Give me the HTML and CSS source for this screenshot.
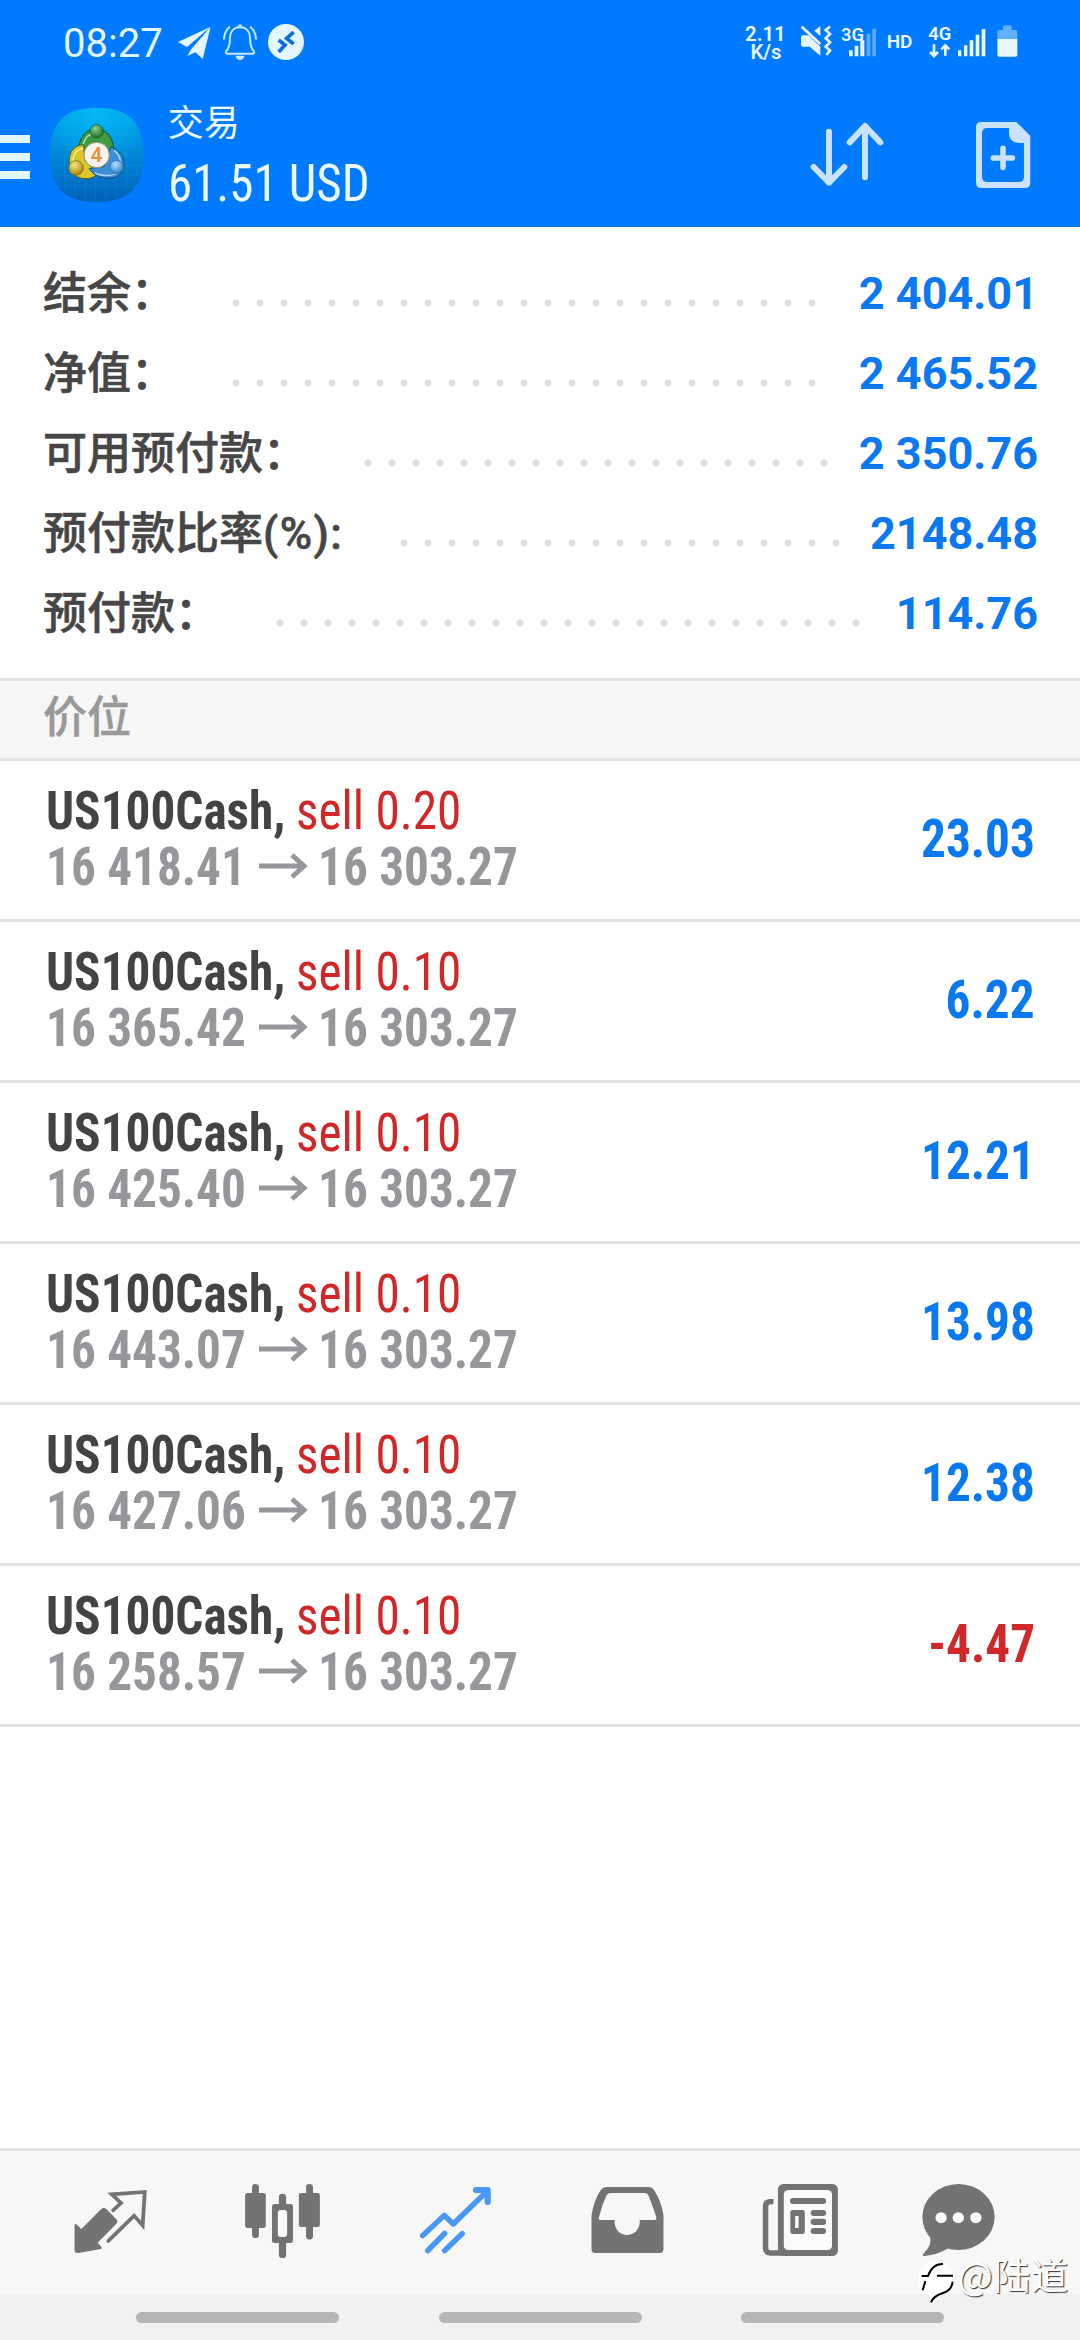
FILE: index.html
```
<!DOCTYPE html>
<html lang="zh-CN">
<head>
<meta charset="utf-8">
<title>交易</title>
<link rel="stylesheet" href="styles.css">
</head>
<body>
<div class="screen">
  <header class="header">
    <div class="status">
      <span class="clock">08:27</span>
      <svg class="status-left" viewBox="525 60 396 132">
        <g fill="#e4f6ff">
          <path d="M534 126L632 80L561 141Z"/>
          <path d="M632 80L608 177L586 157L562 168L574 147Z"/>
          <circle cx="858" cy="126" r="54"/>
        </g>
        <g fill="none" stroke="#c6ecff" stroke-width="6" stroke-linecap="round" stroke-linejoin="round">
          <path d="M720 82C700 82 690 96 690 114C690 136 687 145 678 154Q676 161 682 161H758Q764 161 762 154C753 145 750 136 750 114C750 96 740 82 720 82Z"/>
          <path d="M688 82Q674 93 672 116M752 82Q766 93 768 116"/>
        </g>
        <path d="M712 80Q720 66 728 80ZM707 167H733Q731 180 720 180Q709 180 707 167Z" fill="#c6ecff"/>
        <path d="M836 120L855 135L836 156M881 96L860 115L881 132" fill="none" stroke="#0a6fe0" stroke-width="11"/>
      </svg>
      <svg class="status-right" viewBox="74 60 822 132" fill="#e9f6ff">
        <text class="s-speed" x="135" y="123">2.11</text>
        <text class="s-speed" x="137" y="178">K/s</text>
        <path d="M242 112Q242 106 248 106H264L300 140V167L268 140H248Q242 140 242 134Z"/>
        <path d="M244 80L300 132" stroke="#e9f6ff" stroke-width="8"/>
        <path d="M300 78V108L282 92Z"/>
        <path d="M329 80L316 90L329 102L316 115L329 127L316 140L329 152L318 165" fill="none" stroke="#e9f6ff" stroke-width="8"/>
        <text class="s-net" x="362" y="122">3G</text>
        <path d="M386 151h11v18h-11zM403 137h11v32h-11zM420 121h12v48h-12z"/>
        <path d="M439 101h11v68h-11zM456 86h11v83h-11z" opacity=".4"/>
        <text class="s-hd" x="499" y="143">HD</text>
        <text class="s-net" x="624" y="120">4G</text>
        <path d="M641 133V166M629 156L641 168L653 156M675 167V138M663 148L675 136L687 148" fill="none" stroke="#e9f6ff" stroke-width="8"/>
        <path d="M713 151h10v18h-10zM731 136h10v33h-10zM748 121h11v48h-11zM766 104h11v65h-11zM784 87h11v82h-11z"/>
        <path d="M831 96Q831 90 837 90H848V81Q848 76 853 76H869Q874 76 874 81V90H885Q891 90 891 96V117H831Z" opacity=".42"/>
        <path d="M831 117H891V164Q891 170 885 170H837Q831 170 831 164Z"/>
      </svg>
    </div>
    <div class="titlebar">
      <div class="menu"><i></i><i></i><i></i></div>
      <svg class="logo" viewBox="0 0 280 282">
        <defs>
          <linearGradient id="bg" x1="0" y1="0" x2="0" y2="1"><stop offset="0" stop-color="#00a6e8"/><stop offset=".5" stop-color="#0088d8"/><stop offset="1" stop-color="#0060b8"/></linearGradient>
          <radialGradient id="glow" cx=".5" cy="0" r=".6"><stop offset="0" stop-color="#00b8f4"/><stop offset="1" stop-color="#00b8f4" stop-opacity="0"/></radialGradient>
          <radialGradient id="gr" cx=".4" cy=".3" r=".7"><stop offset="0" stop-color="#8fd08a"/><stop offset="1" stop-color="#1d6f2c"/></radialGradient>
          <radialGradient id="ye" cx=".4" cy=".3" r=".7"><stop offset="0" stop-color="#f4e87a"/><stop offset="1" stop-color="#a8850c"/></radialGradient>
          <radialGradient id="bl" cx=".4" cy=".3" r=".7"><stop offset="0" stop-color="#b4defc"/><stop offset="1" stop-color="#2f80c8"/></radialGradient>
          <path id="sq" d="M140 0C235 0 280 40 280 141S235 282 140 282S0 242 0 141S45 0 140 0Z"/>
        </defs>
        <use href="#sq" fill="url(#bg)"/>
        <use href="#sq" fill="url(#glow)"/>
        <path d="M44 26V256M75 10V272M106 4V278M137 0V282M168 3V279M199 9V273M230 24V258M20 50H260M8 80H272M3 110H277M0 141H280M3 172H277M8 203H272M20 234H260" stroke="#3bb4ee" stroke-opacity=".3" stroke-width="1.5" fill="none"/>
        <g stroke-linejoin="round">
          <path d="M88 108C98 74 118 62 140 62S184 80 190 112C192 132 184 152 166 168L138 120L100 140C88 132 86 120 88 108Z" fill="#3f9a42" stroke="#124f2a" stroke-width="3"/>
          <path d="M99 110C106 84 122 75 142 75" stroke="#b9e4a8" stroke-width="4" fill="none"/>
          <path d="M100 110C74 112 58 128 58 158C56 184 70 212 108 212C126 212 138 204 142 194L106 160Z" fill="#dcc62c" stroke="#55601a" stroke-width="3"/>
          <path d="M100 121C80 124 69 138 69 160" stroke="#faf3a0" stroke-width="4" fill="none"/>
          <path d="M182 116C208 126 222 146 222 170C222 198 200 212 168 210C144 208 130 200 118 182L162 176Z" fill="#3c8ed8" stroke="#164b80" stroke-width="3"/>
          <path d="M134 194C150 204 190 208 206 190M192 128Q210 140 211 160" stroke="#a8dcfa" stroke-width="4" fill="none"/>
          <circle cx="140" cy="70" r="20" fill="url(#gr)" stroke="#155a26" stroke-width="2"/>
          <circle cx="78" cy="180" r="22" fill="url(#ye)" stroke="#6e6210" stroke-width="2"/>
          <circle cx="200" cy="177" r="20" fill="url(#bl)" stroke="#2a68a4" stroke-width="2"/>
        </g>
        <circle cx="140" cy="141" r="38" fill="#f7f3ee" stroke="#8a9a78" stroke-width="3"/>
        <text class="logo-num" x="139" y="163">4</text>
      </svg>
      <div class="heading">
        <div class="heading-title">交易</div>
        <div class="heading-sum"><span class="narrow">61.51 USD</span></div>
      </div>
      <svg class="sort" viewBox="264 360 228 210" fill="none" stroke="#c9e2ff" stroke-width="18" stroke-linecap="round" stroke-linejoin="round">
        <path d="M324 395V548M278 501L324 548L370 501M432 532V378M386 427L432 378L478 427"/>
      </svg>
      <svg class="new-order" viewBox="762 360 169 210">
        <path fill="#c9e2ff" fill-rule="evenodd" d="M781 366H886L928 407V548Q928 564 912 564H781Q765 564 765 548V382Q765 366 781 366ZM800 384Q783 384 783 400V530Q783 546 800 546H893Q909 546 909 530V429H893Q864 426 864 399V384Z"/>
        <path d="M846 445V502M817 474H874" stroke="#c9e2ff" stroke-width="17" stroke-linecap="round"/>
      </svg>
    </div>
  </header>

  <section class="summary">
    <div class="sum-row"><span>结余：</span><i class="dots"></i><b>2 404.01</b></div>
    <div class="sum-row"><span>净值：</span><i class="dots"></i><b>2 465.52</b></div>
    <div class="sum-row"><span>可用预付款：</span><i class="dots"></i><b>2 350.76</b></div>
    <div class="sum-row"><span>预付款比率<span class="unit">(%):</span></span><i class="dots"></i><b>2148.48</b></div>
    <div class="sum-row"><span>预付款：</span><i class="dots"></i><b>114.76</b></div>
  </section>

  <h2 class="section-title">价位</h2>

  <main class="trades">
    <article class="trade">
      <div class="deal"><b class="narrow">US100Cash,</b><span class="narrow side">sell 0.20</span></div>
      <div class="prices"><b class="narrow">16 418.41</b><svg class="arrow" viewBox="0 0 49 26"><path d="M0 13H45M33 2L45 13L33 24"/></svg><b class="narrow">16 303.27</b></div>
      <b class="narrow profit">23.03</b>
    </article>
    <article class="trade">
      <div class="deal"><b class="narrow">US100Cash,</b><span class="narrow side">sell 0.10</span></div>
      <div class="prices"><b class="narrow">16 365.42</b><svg class="arrow" viewBox="0 0 49 26"><path d="M0 13H45M33 2L45 13L33 24"/></svg><b class="narrow">16 303.27</b></div>
      <b class="narrow profit">6.22</b>
    </article>
    <article class="trade">
      <div class="deal"><b class="narrow">US100Cash,</b><span class="narrow side">sell 0.10</span></div>
      <div class="prices"><b class="narrow">16 425.40</b><svg class="arrow" viewBox="0 0 49 26"><path d="M0 13H45M33 2L45 13L33 24"/></svg><b class="narrow">16 303.27</b></div>
      <b class="narrow profit">12.21</b>
    </article>
    <article class="trade">
      <div class="deal"><b class="narrow">US100Cash,</b><span class="narrow side">sell 0.10</span></div>
      <div class="prices"><b class="narrow">16 443.07</b><svg class="arrow" viewBox="0 0 49 26"><path d="M0 13H45M33 2L45 13L33 24"/></svg><b class="narrow">16 303.27</b></div>
      <b class="narrow profit">13.98</b>
    </article>
    <article class="trade">
      <div class="deal"><b class="narrow">US100Cash,</b><span class="narrow side">sell 0.10</span></div>
      <div class="prices"><b class="narrow">16 427.06</b><svg class="arrow" viewBox="0 0 49 26"><path d="M0 13H45M33 2L45 13L33 24"/></svg><b class="narrow">16 303.27</b></div>
      <b class="narrow profit">12.38</b>
    </article>
    <article class="trade">
      <div class="deal"><b class="narrow">US100Cash,</b><span class="narrow side">sell 0.10</span></div>
      <div class="prices"><b class="narrow">16 258.57</b><svg class="arrow" viewBox="0 0 49 26"><path d="M0 13H45M33 2L45 13L33 24"/></svg><b class="narrow">16 303.27</b></div>
      <b class="narrow profit loss">-4.47</b>
    </article>
  </main>

  <nav class="tabs">
    <svg viewBox="199 150 240 240" preserveAspectRatio="none">
      <path fill="#737373" d="M215 286Q216 279 222 284L235 297L292 238Q300 230 308 238L336 267Q343 275 336 282L282 338L293 350Q297 356 288 358L226 369Q215 370 215 360Z"/>
      <path fill="none" stroke="#737373" stroke-width="11" stroke-linecap="round" d="M327 241L350 219L323 193L419 186L413 286L388 257L313 333"/>
    </svg>
    <svg viewBox="697 150 240 240" preserveAspectRatio="none" fill="#737373">
      <rect x="729" y="162" width="20" height="162" rx="10"/><rect x="709" y="189" width="60" height="105" rx="7"/>
      <rect x="886" y="162" width="20" height="167" rx="10"/><rect x="865" y="189" width="61" height="102" rx="7"/>
      <rect x="807" y="191" width="21" height="193" rx="10"/><rect x="787" y="222" width="61" height="117" rx="7"/>
      <rect x="804" y="240" width="27" height="81" rx="9" fill="#fbfbfb"/>
    </svg>
    <svg viewBox="1197 150 240 240" preserveAspectRatio="none" fill="none" stroke="#4898f6" stroke-width="16" stroke-linecap="round" stroke-linejoin="round">
      <path d="M1222 317L1285 256L1311 282L1405 188M1286 362L1337 311M1237 362L1286 310"/>
      <path stroke-width="18" d="M1377 180L1411 180L1411 216"/>
    </svg>
    <svg viewBox="131 150 240 240" preserveAspectRatio="none">
      <path fill="#737373" fill-rule="evenodd" d="M147 256Q155 208 174 180Q180 171 190 171H312Q322 171 329 181Q350 214 356 256V358Q356 369 345 369H158Q147 369 147 358ZM191 195Q195 189 203 189H301Q308 189 312 196Q319 213 335 260Q337 270 328 270H287V279C285 300 270 315 250 315S217 300 214 279V270H175Q165 270 169 260Q178 223 191 195Z"/>
    </svg>
    <svg viewBox="635 150 240 240" preserveAspectRatio="none">
      <path fill="none" stroke="#737373" stroke-width="16" d="M677 215H668Q654 215 654 229V353Q654 369 670 369H700"/>
      <rect x="690" y="162" width="174" height="216" rx="16" fill="#737373"/>
      <rect x="707" y="180" width="140" height="180" rx="13" fill="#fbfbfb"/>
      <g fill="#737373"><rect x="725" y="204" width="105" height="18" rx="9"/><rect x="785" y="240" width="45" height="18" rx="9"/><rect x="785" y="266" width="45" height="19" rx="9"/><rect x="785" y="294" width="45" height="18" rx="9"/>
      <path fill-rule="evenodd" d="M733 240H761Q768 240 768 247V305Q768 312 761 312H733Q726 312 726 305V247Q726 240 733 240ZM740 258V294H750V258Z"/></g>
    </svg>
    <svg viewBox="1093 150 240 240" preserveAspectRatio="none">
      <ellipse cx="1213.500" cy="261" rx="105" ry="99" fill="#737373"/>
      <path fill="#737373" d="M1130 318Q1140 342 1111 372Q1107 378 1115 378Q1152 375 1184 355Z"/>
      <g fill="#fbfbfb"><circle cx="1163" cy="263" r="16.500"/><circle cx="1213" cy="263" r="16.500"/><circle cx="1264" cy="263" r="16.500"/></g>
    </svg>
  </nav>

  <div class="gestures"><i></i><i></i><i></i></div>

  <div class="watermark">
    <svg viewBox="52 28 116 134">
      <path fill="#fff" d="M108 34A52 52 0 0 1 162 88Q160 125 130 136Q105 142 92 160L88 134A52 52 0 0 1 108 34Z"/>
      <path fill="none" stroke="#000" stroke-width="6" d="M66 79H85Q98 42 130 43M112 78H160M77 94L69 122M159 96Q156 122 130 130Q102 138 94 158"/>
    </svg>
    <span>@陆道</span>
  </div>
</div>
</body>
</html>
```
FILE: styles.css
```
* { box-sizing: border-box; }
body {
  margin: 0;
  background: #fff;
  font-family: Roboto, "Noto Sans CJK SC", sans-serif;
  color: #464646;
}
svg { display: block; flex: none; }
i { display: block; }

.screen {
  position: relative;
  display: flex;
  flex-direction: column;
  width: 1080px;
  height: 2340px;
  overflow: hidden;
}

.header {
  flex: none;
  height: 227px;
  background: #007aff;
  border-bottom: 1px solid #1470cc;
}
.status {
  display: flex;
  height: 84px;
  padding-left: 63px;
}
.clock {
  width: 112px;
  font-size: 40px;
  line-height: 87px;
  color: #e2f6ff;
}
.status-left { width: 132px; height: 44px; margin-top: 20px; }
.status-right { width: 274px; height: 44px; margin: 20px 0 0 437.700px; }
.s-speed { font-size: 61px; font-weight: 600; text-anchor: middle; }
.s-net { font-size: 55px; font-weight: 600; }
.s-hd { font-size: 57px; font-weight: 600; }

.titlebar { display: flex; height: 142px; }
.menu {
  display: flex;
  flex-direction: column;
  gap: 10px;
  width: 30px;
  padding-top: 51px;
}
.menu i { height: 8px; background: #e2f8ff; }
.logo { width: 93.300px; height: 94px; margin: 24px 0 0 19.500px; }
.logo-num { font-size: 62px; font-weight: 500; fill: #ee8a3c; text-anchor: middle; }
.heading { width: 667px; padding-left: 25px; color: #eafaff; }
.heading-title { font-size: 36px; line-height: 42px; margin-top: 19px; }
.heading-sum { font-size: 51px; line-height: 60px; margin-top: 9px; }
.sort { width: 76px; height: 70px; margin: 36px 0 0 -1px; }
.new-order { width: 56.300px; height: 70px; margin: 36px 0 0 90px; }

.narrow {
  display: inline-block;
  font-family: "Roboto Condensed", Roboto, sans-serif;
  white-space: nowrap;
  transform: scaleX(.912);
  transform-origin: left;
}
.heading-sum .narrow { font-weight: 450; transform: scaleX(.96); }

.summary { flex: none; height: 451px; padding: 27px 42px 0 43px; }
.sum-row {
  display: flex;
  height: 80px;
  font-size: 44px;
  font-weight: 500;
  line-height: 80px;
}
.sum-row > span { -webkit-text-stroke: .6px; }
.sum-row b { font-size: 45px; font-weight: 700; color: #0a78f0; }
.unit { letter-spacing: 1.400px; }
.dots {
  flex: 1;
  height: 8px;
  margin: 45px 28px 0 49px;
  background: radial-gradient(circle at 12px 4px, #e0e0e0 3px, transparent 4px) 0 0 / 24px 8px repeat-x;
}

.section-title {
  flex: none;
  height: 83px;
  margin: 0;
  padding-left: 43px;
  border-top: 3px solid #e4e4e4;
  border-bottom: 3px solid #e4e4e4;
  background: #f6f6f6;
  font-size: 44px;
  font-weight: 500;
  line-height: 74px;
  color: #999;
  -webkit-text-stroke: .4px;
}

.trades { flex: 1; }
.trade {
  display: grid;
  grid-template-columns: 1fr auto;
  grid-template-rows: 56px 56px;
  height: 161px;
  padding: 22px 45px 0 46px;
  border-bottom: 3px solid #e4e4e4;
  font-size: 54px;
  line-height: 56px;
}
.deal { display: grid; grid-template-columns: 250px 1fr; color: #434343; }
.side { color: #d02828; }
.prices { display: grid; grid-template-columns: 213px 58.500px 1fr; color: #97979b; grid-row: 2; }
.arrow { width: 49px; height: 26px; margin-top: 14px; fill: none; stroke: #97979b; stroke-width: 5; }
.profit {
  grid-column: 2;
  grid-row: 1 / 3;
  align-self: center;
  color: #0a78f0;
  transform-origin: right;
}
.loss { color: #d02828; }

.tabs {
  flex: none;
  display: flex;
  gap: 89.900px;
  height: 146px;
  padding: 29px 0 0 68.500px;
  border-top: 3px solid #e4e4e4;
  background: #f7f7f7;
}
.tabs svg { width: 82.650px; height: 80px; }
.tabs svg:last-child { margin-left: -14.500px; }

.gestures {
  flex: none;
  display: flex;
  gap: 99.500px;
  height: 46px;
  padding: 18px 0 0 136px;
  background: #f1f1f1;
}
.gestures i { width: 203px; height: 11px; border-radius: 6px; background: #b6b6b6; }

.watermark {
  position: absolute;
  left: 917px;
  top: 2259px;
  display: flex;
  gap: 2px;
}
.watermark svg { width: 38.700px; height: 44.700px; }
.watermark span {
  margin-top: -4px;
  font-family: "Noto Sans CJK SC", sans-serif;
  font-size: 37px;
  font-weight: 400;
  letter-spacing: .8px;
  line-height: 38px;
  color: #fff;
  text-shadow: 1px 1px 1px #333;
}
```
